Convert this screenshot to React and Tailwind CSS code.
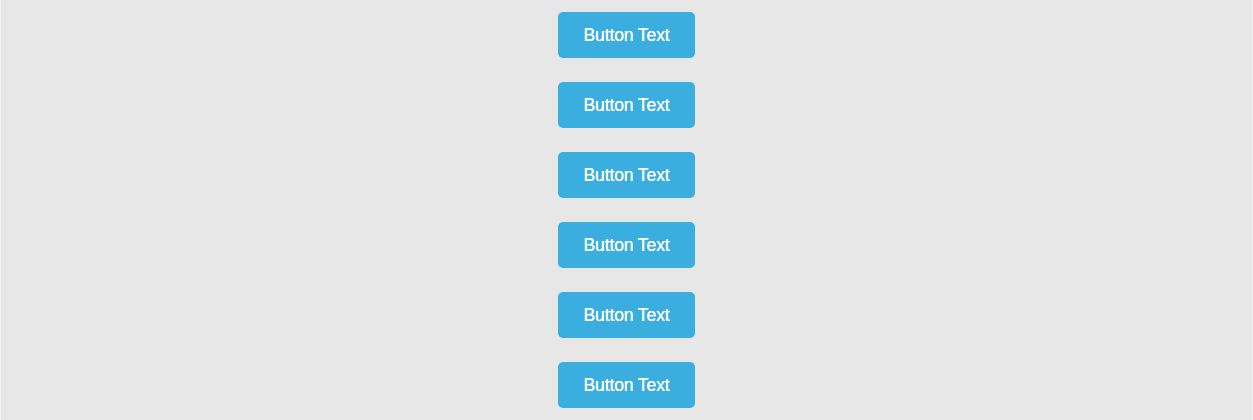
export default function App() {
  const items = [0, 1, 2, 3, 4, 5];
  return (
    <div className="min-h-[420px] bg-[#e7e7e7] border-x border-[#f2f2f2] flex flex-col items-center gap-6 pt-3 pb-3" style={{ fontFamily: '"Liberation Sans", Arial, sans-serif' }}>
      {items.map((i) => (
        <button key={i} className="w-[137px] h-[46px] rounded-[5px] bg-[#3baee0] text-white text-[17.5px] leading-none tracking-[-0.1px] flex items-center justify-center pt-[2px] [text-shadow:0_0_0.4px_#fff]">
          Button Text
        </button>
      ))}
    </div>
  );
}
